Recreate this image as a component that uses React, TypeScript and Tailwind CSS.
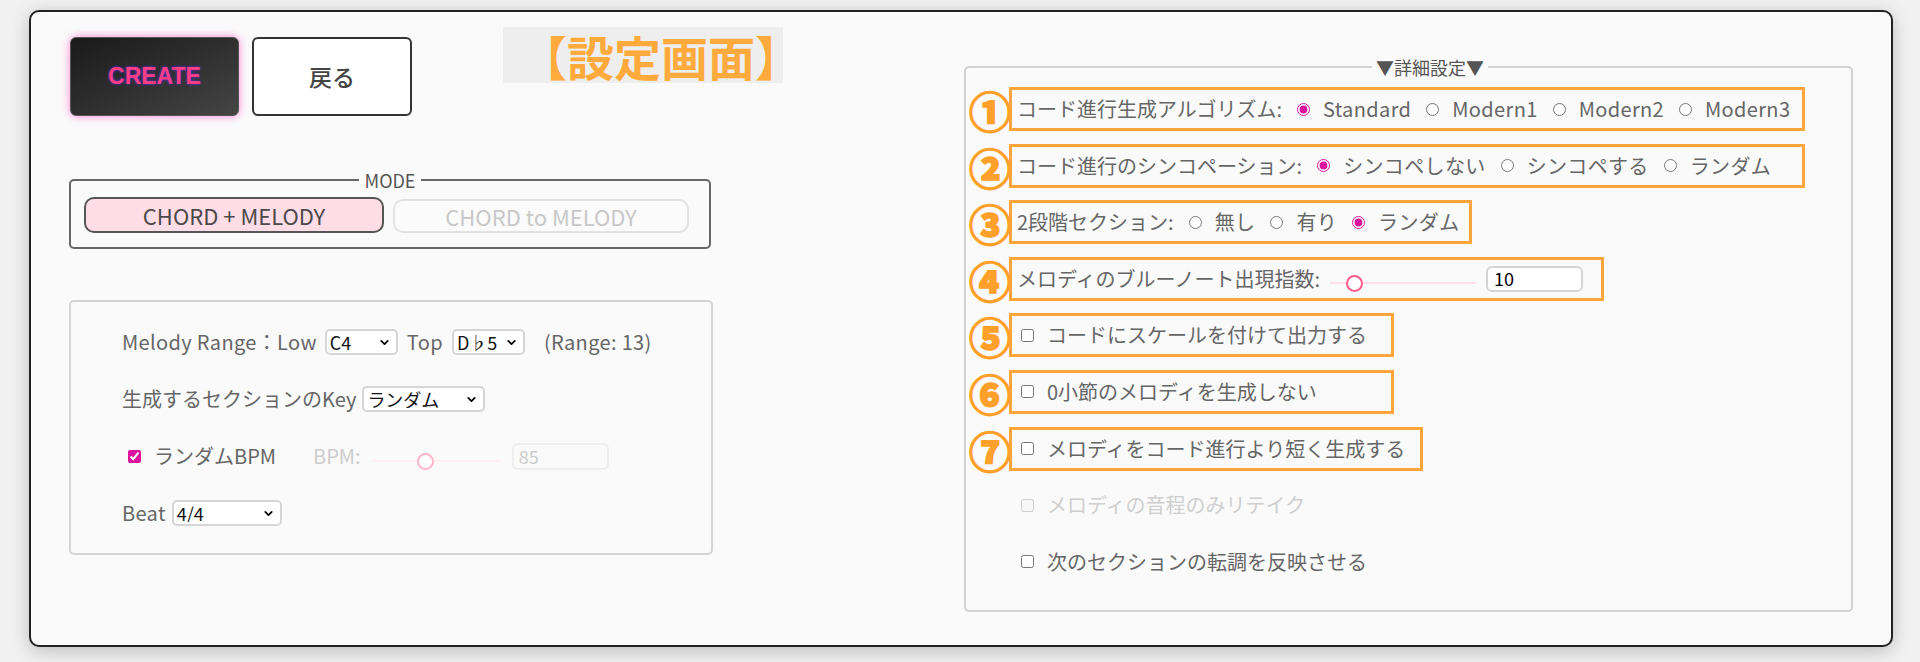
import React from "react";
import { ChevronDown } from "lucide-react";

// annotation number placed just left of an orange frame
function Mark({ n }: { n: string }) {
  return (
    <span className="absolute right-full top-1/2 -translate-y-1/2 mr-[1px] mt-[1px] text-[42px] leading-none font-black text-[#ffa02a] [-webkit-text-stroke:1.4px_#ffa02a]">
      {n}
    </span>
  );
}

function Radio({ name, label, checked }: { name: string; label: string; checked?: boolean }) {
  return (
    <label className="flex items-center ml-[15px]">
      <input type="radio" name={name} defaultChecked={checked} className="w-[13px] h-[13px] accent-[#dc139f]" />
      <span className="ml-[13px] tracking-[0.35px]">{label}</span>
    </label>
  );
}

function Check({ label, disabled }: { label: string; disabled?: boolean }) {
  return (
    <label className={`flex items-center ${disabled ? "text-[#cfcfcf]" : ""}`}>
      <input type="checkbox" disabled={disabled} className="ml-[4px] w-[13px] h-[13px] accent-[#dc139f]" />
      <span className="ml-[13px]">{label}</span>
    </label>
  );
}

function Select({ value, className }: { value: string; className: string }) {
  return (
    <div className={`h-[26px] flex items-center border-2 border-[#d6d6d6] rounded-[5px] bg-white pl-[3px] pr-[5px] ${className}`}>
      <select
        defaultValue={value}
        className="appearance-none flex-1 min-w-0 bg-transparent outline-none text-[18px] leading-none text-[#111]"
      >
        <option>{value}</option>
      </select>
      <ChevronDown size={13} strokeWidth={3.2} className="text-black shrink-0" />
    </div>
  );
}

const sliderCls =
  "appearance-none bg-transparent h-[18px] [&::-webkit-slider-runnable-track]:h-[2px] [&::-webkit-slider-thumb]:appearance-none [&::-webkit-slider-thumb]:w-[17px] [&::-webkit-slider-thumb]:h-[17px] [&::-webkit-slider-thumb]:rounded-full [&::-webkit-slider-thumb]:bg-white [&::-webkit-slider-thumb]:mt-[-7.5px]";

export default function App() {
  return (
    <div className="min-h-screen bg-[#f1f1f1] pl-[29px] pt-[10px] font-['Noto_Sans_CJK_JP',sans-serif] text-[20px] text-[#666]">
      <div className="w-[1864px] h-[637px] bg-[#fafafa] border-2 border-[#222] rounded-[10px] shadow-[0_4px_18px_rgba(0,0,0,0.22)] flex items-start pt-[15px] pl-[38px]">
        {/* left column */}
        <div className="w-[644px] shrink-0 flex flex-col">
          <div className="flex items-start h-[89px]">
            <button className="shrink-0 ml-[1px] mt-[10px] w-[169px] h-[79px] rounded-[6px] border border-[#555] bg-linear-to-br from-[#1a1a1a] to-[#454545] shadow-[0_0_9px_#ff80d4] font-['Liberation_Sans',Arial,sans-serif] font-bold text-[23px] text-[#ff3d84] [text-shadow:0_0_3px_#5a32ff]">
              CREATE
            </button>
            <button className="shrink-0 ml-[13px] mt-[10px] w-[160px] h-[79px] rounded-[6px] border-2 border-[#333] bg-white text-[23px] font-medium text-[#444]">
              戻る
            </button>
            <div className="shrink-0 ml-[91px] w-[280px] h-[56px] bg-[#eeeeee] flex items-center pl-[17px] whitespace-nowrap text-[47px] leading-none font-bold text-[#ffaa3c]">
              【設定画面】
            </div>
          </div>

          <fieldset className="mt-[53px] w-[642px] h-[80px] border-2 border-[#666] rounded-[5px] px-[13px]">
            <legend className="mx-auto px-[6px] text-[18px] leading-[22px] text-[#555]">MODE</legend>
            <div className="flex gap-[9px] mt-[6px]">
              <button className="w-[300px] h-[36px] rounded-[10px] border-[2.5px] border-[#555] bg-[#ffdde6] text-[22px] leading-none text-[#4a4a4a]">
                CHORD + MELODY
              </button>
              <button className="w-[296px] h-[34px] mt-[2px] rounded-[10px] border-2 border-[#e2e2e2] bg-[#fbfbfb] text-[22px] leading-none text-[#c8c8c8]">
                CHORD to MELODY
              </button>
            </div>
          </fieldset>

          <div className="mt-[51px] w-[644px] h-[255px] border-2 border-[#d4d4d4] rounded-[5px] pl-[51px] pt-[25px] flex flex-col gap-[27px]">
            <div className="h-[30px] flex items-center whitespace-nowrap">
              <span className="tracking-[0.35px]">Melody Range：Low</span>
              <Select value="C4" className="ml-[8px] w-[73px]" />
              <span className="ml-[9px] tracking-[0.35px]">Top</span>
              <Select value="D♭5" className="ml-[9px] w-[73px]" />
              <span className="ml-[19px] tracking-[0.35px]">(Range: 13)</span>
            </div>
            <div className="h-[30px] flex items-center whitespace-nowrap">
              <span>生成するセクションのKey</span>
              <Select value="ランダム" className="ml-[6px] w-[123px]" />
            </div>
            <div className="h-[30px] flex items-center whitespace-nowrap">
              <input type="checkbox" defaultChecked className="ml-[6px] w-[13px] h-[13px] accent-[#dc139f]" />
              <span className="ml-[13px]">ランダムBPM</span>
              <span className="ml-[37px] text-[#cdcdcd]">BPM:</span>
              <input
                type="range"
                min={40}
                max={150}
                defaultValue={85}
                disabled
                className={`${sliderCls} ml-[11px] mt-[10px] w-[129px] [&::-webkit-slider-runnable-track]:bg-[#fff0f4] [&::-webkit-slider-thumb]:border-2 [&::-webkit-slider-thumb]:border-[#ffb4c9]`}
              />
              <input
                type="text"
                disabled
                defaultValue="85"
                className="ml-[11px] w-[97px] h-[27px] border-2 border-[#eeeeee] rounded-[6px] bg-[#fafafa] pl-[5px] text-[18px] text-[#cccccc]"
              />
            </div>
            <div className="h-[30px] flex items-center whitespace-nowrap">
              <span className="tracking-[0.35px]">Beat</span>
              <Select value="4/4" className="ml-[6px] w-[110px]" />
            </div>
          </div>
        </div>

        {/* right column: 詳細設定 */}
        <fieldset className="shrink-0 ml-[251px] mt-[28px] w-[889px] h-[557px] border-2 border-[#d2d2d2] rounded-[5px] pl-[43px]">
          <legend className="mx-auto px-[4px] text-[18px] leading-[24px] text-[#555]">▼詳細設定▼</legend>
          <div className="mt-[8px] flex flex-col gap-[12.6px] whitespace-nowrap">
            <div className="relative w-[796px] h-[44px] border-[3px] border-[#ffa53c] pl-[5px] flex items-center">
              <Mark n="①" />
              <span>コード進行生成アルゴリズム:</span>
              <Radio name="algo" label="Standard" checked />
              <Radio name="algo" label="Modern1" />
              <Radio name="algo" label="Modern2" />
              <Radio name="algo" label="Modern3" />
            </div>
            <div className="relative w-[796px] h-[44px] border-[3px] border-[#ffa53c] pl-[5px] flex items-center">
              <Mark n="②" />
              <span>コード進行のシンコペーション:</span>
              <Radio name="sync" label="シンコペしない" checked />
              <Radio name="sync" label="シンコペする" />
              <Radio name="sync" label="ランダム" />
            </div>
            <div className="relative w-[463px] h-[44px] border-[3px] border-[#ffa53c] pl-[5px] flex items-center">
              <Mark n="③" />
              <span>2段階セクション:</span>
              <Radio name="two" label="無し" />
              <Radio name="two" label="有り" />
              <Radio name="two" label="ランダム" checked />
            </div>
            <div className="relative w-[595px] h-[44px] border-[3px] border-[#ffa53c] pl-[5px] flex items-center">
              <Mark n="④" />
              <span>メロディのブルーノート出現指数:</span>
              <input
                type="range"
                min={0}
                max={80}
                defaultValue={10}
                className={`${sliderCls} ml-[10px] mt-[9px] w-[146px] [&::-webkit-slider-runnable-track]:bg-[#ffdfe8] [&::-webkit-slider-thumb]:border-[2.5px] [&::-webkit-slider-thumb]:border-[#ff5c8c]`}
              />
              <input
                type="text"
                defaultValue="10"
                className="ml-[10px] w-[97px] h-[26px] border-2 border-[#d4d4d4] rounded-[6px] bg-white pl-[6px] text-[18px] text-black"
              />
            </div>
            <div className="relative w-[385px] h-[44px] border-[3px] border-[#ffa53c] pl-[5px] flex items-center">
              <Mark n="⑤" />
              <Check label="コードにスケールを付けて出力する" />
            </div>
            <div className="relative w-[385px] h-[44px] border-[3px] border-[#ffa53c] pl-[5px] flex items-center">
              <Mark n="⑥" />
              <Check label="0小節のメロディを生成しない" />
            </div>
            <div className="relative w-[414px] h-[44px] border-[3px] border-[#ffa53c] pl-[5px] flex items-center">
              <Mark n="⑦" />
              <Check label="メロディをコード進行より短く生成する" />
            </div>
            <div className="h-[44px] border-[3px] border-transparent pl-[5px] flex items-center">
              <Check label="メロディの音程のみリテイク" disabled />
            </div>
            <div className="h-[44px] border-[3px] border-transparent pl-[5px] flex items-center">
              <Check label="次のセクションの転調を反映させる" />
            </div>
          </div>
        </fieldset>
      </div>
    </div>
  );
}
